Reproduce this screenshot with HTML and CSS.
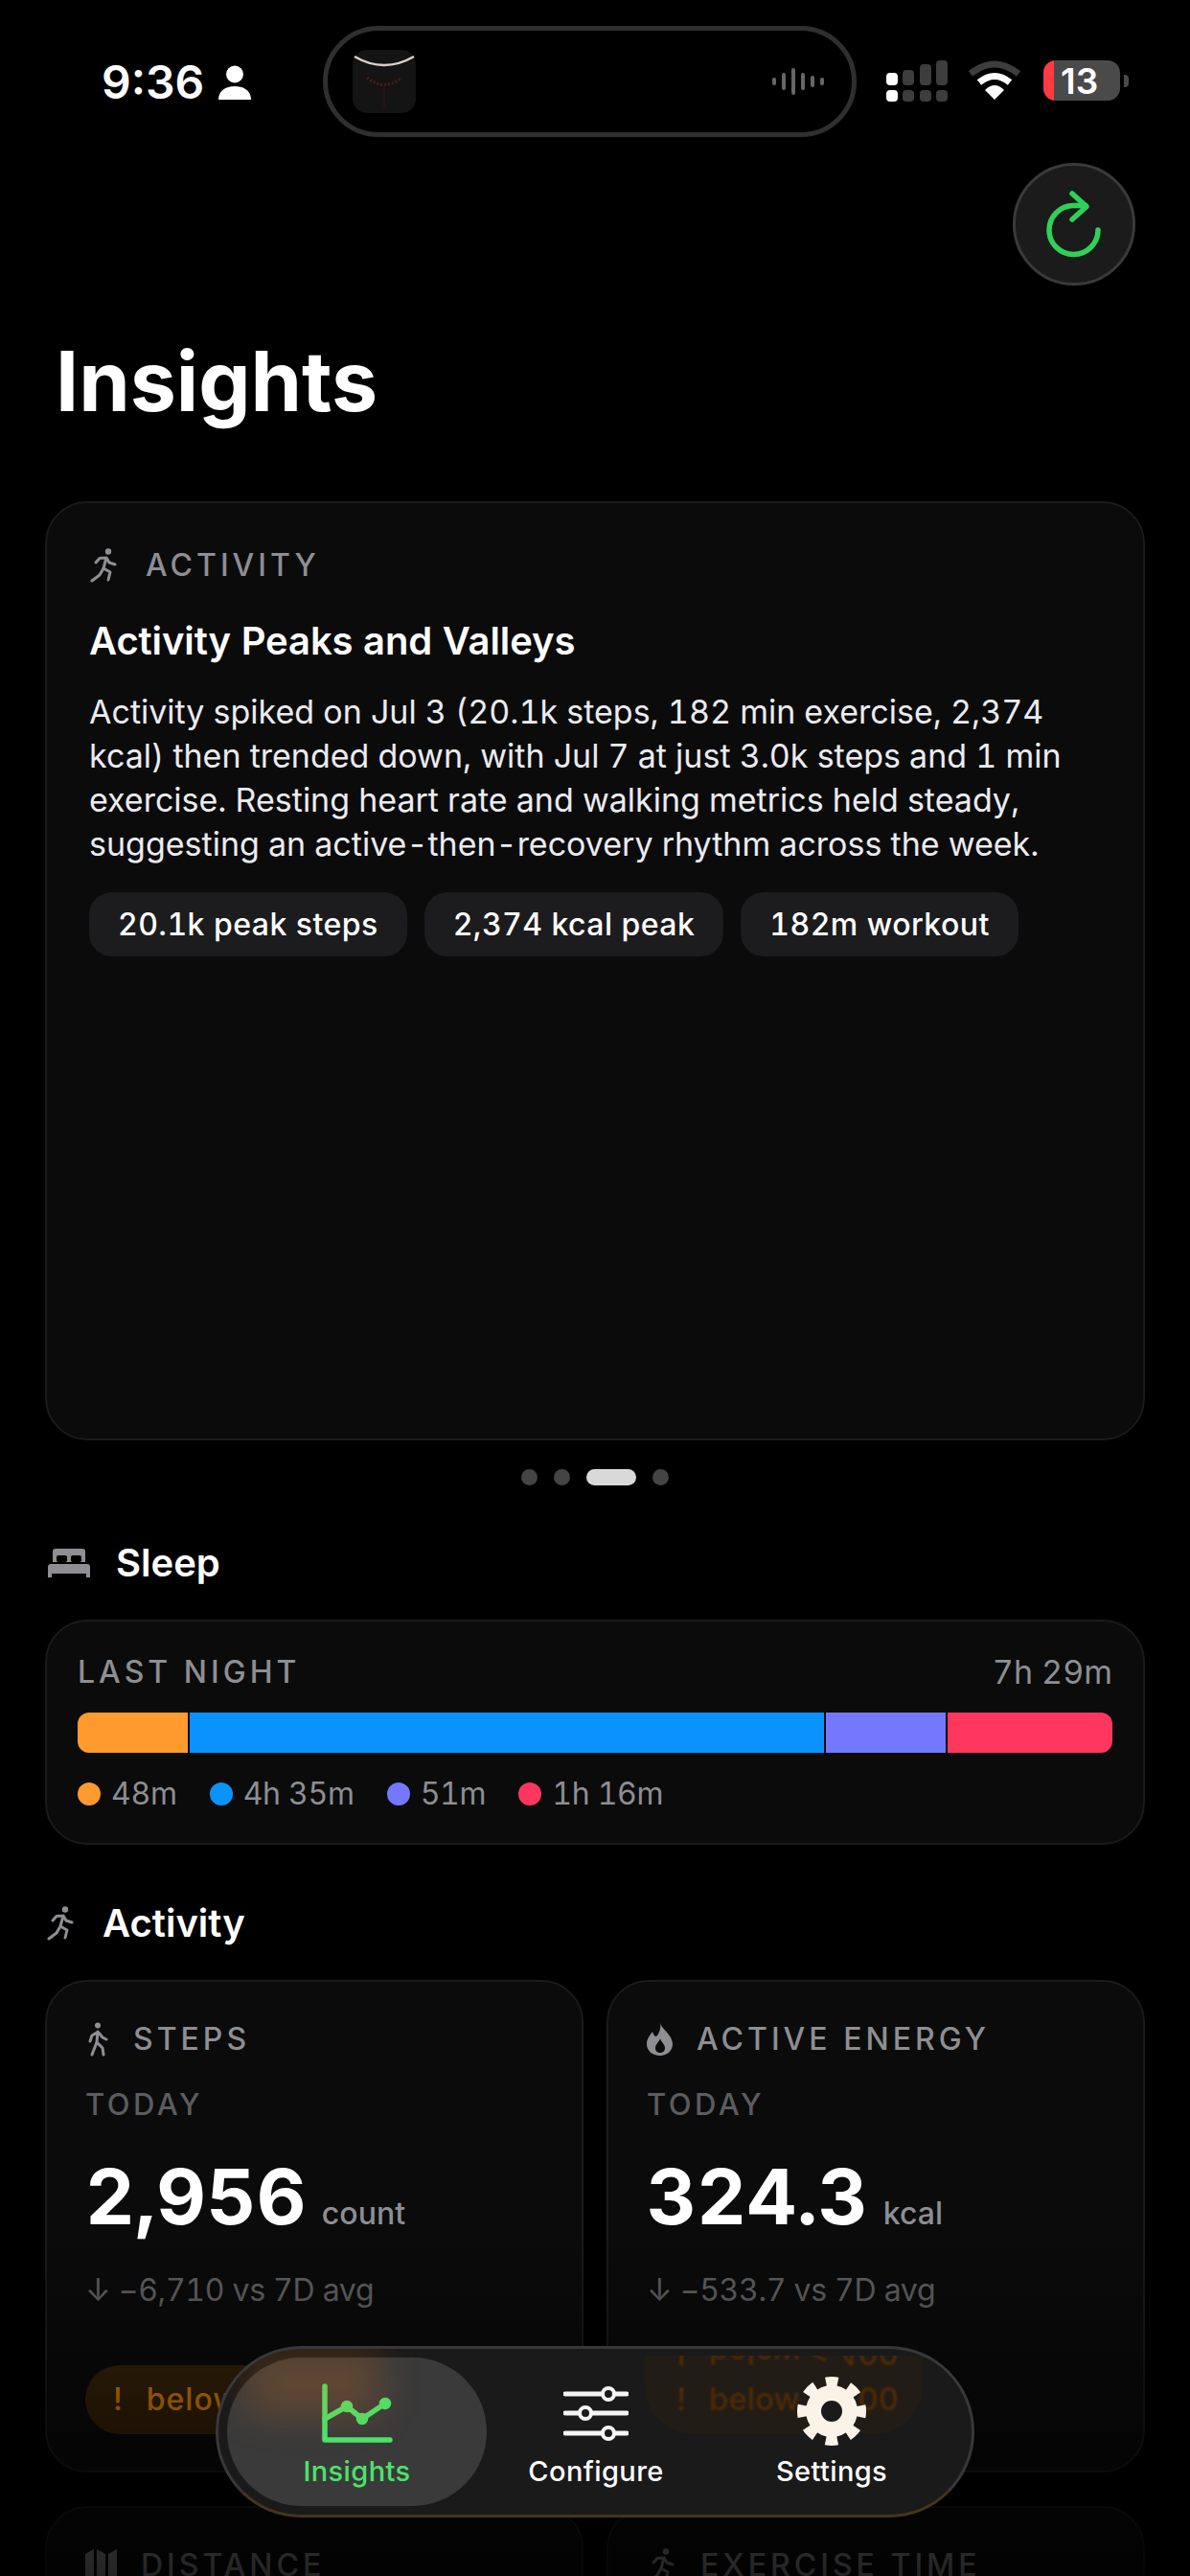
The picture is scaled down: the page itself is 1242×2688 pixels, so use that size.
FILE: index.html
```html
<!DOCTYPE html>
<html lang="en">
<head>
  <meta charset="UTF-8" />
  <meta name="viewport" content="width=device-width, initial-scale=1.0" />
  <title>Insights</title>
  <link rel="stylesheet" href="styles.css">
</head>
<body>

  <div class="status">
    <span class="time">9:36</span>
    <svg class="person" viewBox="0 0 34 36" width="34" height="36"><circle cx="17" cy="9.5" r="9"/><path d="M0 36c0-9 7-14 17-14s17 5 17 14z"/></svg>
    <div class="island">
      <svg class="app-icon" viewBox="0 0 66 66" width="66" height="66">
        <rect width="66" height="66" rx="15" fill="#151414"/>
        <path d="M2 7Q33 25 64 7" fill="none" stroke="#d8d2cc" stroke-width="2.5"/>
        <path d="M15 29Q33 44 51 29" fill="none" stroke="#4a1c1c" stroke-width="3" stroke-dasharray="2 2"/>
        <path d="M33 38V60" stroke="#2e1414" stroke-width="1.5"/>
      </svg>
      <div class="wave">
        <i class="w1"></i><i class="w2"></i><i class="w3"></i><i class="w2"></i><i class="w4"></i><i class="w1"></i>
      </div>
    </div>
    <svg class="signal" viewBox="0 0 64 44" width="64" height="44">
      <rect x="0" y="13" width="12" height="13" rx="4" fill="#fff"/>
      <rect x="17" y="10" width="12" height="16" rx="4" fill="#3d3d3d"/>
      <rect x="35" y="4" width="12" height="22" rx="4" fill="#3d3d3d"/>
      <rect x="52" y="0" width="12" height="26" rx="4" fill="#3d3d3d"/>
      <rect x="0" y="31" width="12" height="12" rx="4" fill="#fff"/>
      <rect x="17" y="31" width="12" height="12" rx="4" fill="#3d3d3d"/>
      <rect x="35" y="31" width="12" height="12" rx="4" fill="#3d3d3d"/>
      <rect x="52" y="31" width="12" height="12" rx="4" fill="#3d3d3d"/>
    </svg>
    <svg class="wifi" viewBox="0 0 56 42" width="56" height="42">
      <path d="M3 14Q28 -6 53 14" fill="none" stroke="#3d3d3d" stroke-width="7"/>
      <path d="M12 23Q28 10 44 23" fill="none" stroke="#fff" stroke-width="7"/>
      <path d="M18 31Q28 21 38 31L28 41z" fill="#fff"/>
    </svg>
    <div class="battery"><span class="battery-low"></span><b>13</b></div>
    <span class="battery-nub"></span>
  </div>

  <div class="refresh-row">
    <button class="refresh">
      <svg viewBox="0 0 60 72" width="60" height="72" fill="none" stroke="#30d158" stroke-width="5.5" stroke-linecap="round" stroke-linejoin="round">
        <path d="M55 42A25.5 25.5 0 1 1 29.5 16.5H42"/>
        <path d="M28 4L43 17.5L28 31"/>
      </svg>
    </button>
  </div>

  <h1 class="page-title">Insights</h1>

  <main class="content">
    <section class="card insight">
      <div class="eyebrow">
        <svg class="run-icon" viewBox="0 0 31 36" width="31" height="36"><use href="#runner"/></svg>
        <span>ACTIVITY</span>
      </div>
      <h2 class="insight-title">Activity Peaks and Valleys</h2>
      <p class="insight-body">Activity spiked on Jul 3 (20.1k steps, 182 min exercise, 2,374 kcal) then trended down, with Jul 7 at just 3.0k steps and 1 min exercise. Resting heart rate and walking metrics held steady, suggesting an active-then-recovery rhythm across the week.</p>
      <div class="chips">
        <span class="chip">20.1k peak steps</span>
        <span class="chip">2,374 kcal peak</span>
        <span class="chip">182m workout</span>
      </div>
    </section>

    <div class="pager">
      <i></i><i></i><i class="on"></i><i></i>
    </div>

    <h2 class="section-head sleep-head">
      <svg viewBox="0 0 44 30" width="44" height="30" fill="#8e8e93">
        <path d="M5 3a3 3 0 0 1 3-3h28a3 3 0 0 1 3 3v11H5z"/>
        <rect x="9" y="7" width="11" height="7" rx="2" fill="#000"/>
        <rect x="24" y="7" width="11" height="7" rx="2" fill="#000"/>
        <path d="M3 16h38a3 3 0 0 1 3 3v7H0v-7a3 3 0 0 1 3-3z"/>
        <rect x="0" y="26" width="4" height="4"/>
        <rect x="40" y="26" width="4" height="4"/>
      </svg>
      <span>Sleep</span>
    </h2>

    <section class="card sleep">
      <div class="sleep-top">
        <span class="sleep-label">LAST NIGHT</span>
        <span class="sleep-total">7h 29m</span>
      </div>
      <div class="sleep-bar">
        <span class="seg core" style="width: 115px"></span>
        <span class="seg deep" style="width: 662px"></span>
        <span class="seg rem" style="width: 125px"></span>
        <span class="seg awake" style="width: 172px"></span>
      </div>
      <div class="legend">
        <span><i class="core"></i>48m</span>
        <span><i class="deep"></i>4h 35m</span>
        <span><i class="rem"></i>51m</span>
        <span><i class="awake"></i>1h 16m</span>
      </div>
    </section>

    <h2 class="section-head activity-head">
      <svg viewBox="0 0 31 36" width="31" height="36"><use href="#runner"/></svg>
      <span>Activity</span>
    </h2>

    <div class="metrics">
      <section class="card metric">
        <div class="eyebrow metric-label">
          <svg viewBox="0 0 25 36" width="25" height="36" fill="none" stroke="#8e8e93" stroke-width="3" stroke-linecap="round" stroke-linejoin="round">
            <circle cx="13" cy="3.5" r="3" fill="#8e8e93" stroke="none"/>
            <path d="M13 10L12 21M12 11L7 14L5 20M14 11L18 16L22 18M12 21L7 34M12 21L18 27L19 34"/>
          </svg>
          <span>STEPS</span>
        </div>
        <div class="period">TODAY</div>
        <div class="value">2,956 <small>count</small></div>
        <div class="delta">↓ −6,710 vs 7D avg</div>
        <div class="flag"><b>!</b>below &lt; 400</div>
      </section>

      <section class="card metric">
        <div class="eyebrow metric-label">
          <svg viewBox="0 0 27 34" width="27" height="34">
            <path fill="#8e8e93" d="M14 0C15 6 27 12 27 22C27 29 21 34 14 34C6 34 0 29 0 22C0 16 4 12 6 9C7 12 8 14 10 14C13 11 15 6 14 0Z"/>
            <path fill="#0b0b0b" d="M14 16C15 20 19 22 19 26C19 29 17 31 14 31C11 31 9 29 9 26C9 22 13 20 14 16Z"/>
          </svg>
          <span>ACTIVE ENERGY</span>
        </div>
        <div class="period">TODAY</div>
        <div class="value">324.3 <small>kcal</small></div>
        <div class="delta">↓ −533.7 vs 7D avg</div>
        <div class="flag"><b>!</b>below &lt; 400</div>
      </section>

      <section class="card metric">
        <div class="eyebrow metric-label">
          <svg viewBox="0 0 33 38" width="33" height="38" fill="#8e8e93">
            <path d="M0 7L9 2V31L0 36z"/><path d="M12 2L21 7V36L12 31z"/><path d="M24 7L33 2V31L24 36z"/>
          </svg>
          <span>DISTANCE</span>
        </div>
      </section>

      <section class="card metric">
        <div class="eyebrow metric-label">
          <svg viewBox="0 0 31 36" width="31" height="36"><use href="#runner"/></svg>
          <span>EXERCISE TIME</span>
        </div>
      </section>
    </div>
  </main>

  <div class="fade"></div>

  <nav class="tabbar">
    <div class="glow glow-left"></div>
    <div class="glow glow-right">
      <span class="ghost flip"><b>!</b>below &lt; 400</span>
      <span class="ghost"><b>!</b>below &lt; 400</span>
    </div>
    <a class="tab active">
      <svg viewBox="0 0 74 62" width="74" height="62" fill="none" stroke="#4ce26a" stroke-width="5.5" stroke-linecap="round" stroke-linejoin="round">
        <path d="M3 3V59H71"/>
        <path d="M3 37L26 24L42 37L66 21"/>
        <circle cx="26" cy="24" r="3.5" fill="#4ce26a"/><circle cx="42" cy="37" r="3.5" fill="#4ce26a"/><circle cx="66" cy="21" r="3.5" fill="#4ce26a"/>
      </svg>
      <span>Insights</span>
    </a>
    <a class="tab">
      <svg viewBox="0 0 68 62" width="68" height="62" fill="none" stroke="#f5f5f5" stroke-width="5" stroke-linecap="round">
        <path d="M2 11H66M2 31H66M2 52H66"/>
        <circle cx="47" cy="11" r="6" fill="#1a1a1a" stroke-width="4"/>
        <circle cx="23" cy="31" r="6" fill="#1a1a1a" stroke-width="4"/>
        <circle cx="47" cy="52" r="6" fill="#1a1a1a" stroke-width="4"/>
      </svg>
      <span>Configure</span>
    </a>
    <a class="tab">
      <svg viewBox="0 0 74 74" width="74" height="74">
        <circle cx="37" cy="37" r="27" fill="#fbf3e8"/>
        <circle cx="37" cy="37" r="30" fill="none" stroke="#fbf3e8" stroke-width="12" stroke-dasharray="12 11.56" stroke-dashoffset="6"/>
        <circle cx="37" cy="37" r="11" fill="#1a1a1a"/>
      </svg>
      <span>Settings</span>
    </a>
  </nav>

  <svg class="defs" width="0" height="0">
    <symbol id="runner" viewBox="0 0 31 36">
      <circle cx="20" cy="3.5" r="3.2" fill="#8e8e93"/>
      <path fill="none" stroke="#8e8e93" stroke-width="3" stroke-linecap="round" stroke-linejoin="round" d="M18 10L15 21M7 15L11 10.5L18 10L21 15L27 17M15 21L22 25L20 33M15 21L11 28L3 34"/>
    </symbol>
  </svg>

</body>
</html>
```

FILE: styles.css
```css
* {
  box-sizing: border-box;
}

html, body {
  height: 2688px;
}

body {
  font-family: 'Inter', 'Liberation Sans', sans-serif;
  font-variant-numeric: tabular-nums;
  margin: 0;
  background: #000;
  color: #fff;
  overflow: hidden;
  position: relative;
}

.defs {
  position: absolute;
}

/* status bar */
.status {
  display: flex;
  align-items: center;
  height: 116px;
  margin-top: 27px;
  padding-left: 106px;
}

.time {
  font-size: 48px;
  font-weight: 600;
  font-variant-numeric: normal;
  width: 122px;
}

.person {
  fill: #fff;
  margin-top: 2px;
}

.island {
  width: 557px;
  height: 116px;
  margin-left: 75px;
  border: 5px solid #2f2f2f;
  border-radius: 58px;
  display: flex;
  align-items: center;
  justify-content: space-between;
  padding: 0 29px 0 26px;
}

.wave {
  display: flex;
  align-items: center;
  gap: 6px;
}

.wave i {
  display: block;
  width: 4px;
  background: #666;
  border-radius: 2px;
}

.w1 { height: 8px; }
.w2 { height: 18px; }
.w3 { height: 28px; }
.w4 { height: 12px; }

.signal {
  margin-left: 31px;
  margin-top: -1px;
}

.wifi {
  margin-left: 21px;
  margin-top: -2px;
}

.battery {
  width: 80px;
  height: 42px;
  margin-left: 23px;
  margin-top: -2px;
  background: #4a4a4a;
  border-radius: 13px;
  overflow: hidden;
  display: flex;
  align-items: center;
  position: relative;
}

.battery-low {
  width: 11px;
  height: 100%;
  background: #ff3b41;
}

.battery b {
  font-size: 37px;
  font-weight: 600;
  font-variant-numeric: normal;
  margin-left: 7px;
}

.battery-nub {
  width: 5px;
  height: 13px;
  margin-left: 4px;
  margin-top: -2px;
  background: #4a4a4a;
  border-radius: 0 4px 4px 0;
}

/* header */
.refresh-row {
  display: flex;
  justify-content: flex-end;
  margin-top: 27px;
  padding-right: 57px;
}

.refresh {
  width: 128px;
  height: 128px;
  padding: 0;
  background: #1b1b1b;
  border: 3px solid #3a3a3a;
  border-radius: 50%;
  display: flex;
  align-items: center;
  justify-content: center;
}

.page-title {
  font-size: 86px;
  font-weight: 700;
  line-height: 90px;
  margin: 55px 0 80px 58px;
}

.content {
  padding: 0 47px;
}

.card {
  background: #0b0b0b;
  border: 2px solid #1b1b1b;
  border-radius: 44px;
}

/* insight carousel */
.insight {
  height: 980px;
  padding: 45px 44px;
}

.eyebrow {
  display: flex;
  align-items: center;
  gap: 28px;
  color: #8e8e93;
  font-size: 32px;
  font-weight: 500;
  letter-spacing: 4px;
}

.insight-title {
  font-size: 40px;
  font-weight: 600;
  letter-spacing: -0.1px;
  line-height: 50px;
  margin: 35px 0 26px;
}

.insight-body {
  font-size: 34px;
  line-height: 46px;
  color: #ebebf0;
  margin: 0 0 27px;
}

.chips {
  display: flex;
  gap: 18px;
}

.chip {
  height: 67px;
  padding: 0 30px;
  background: #1c1c1e;
  border-radius: 24px;
  font-size: 32px;
  font-weight: 500;
  letter-spacing: 0.45px;
  line-height: 67px;
}

.pager {
  display: flex;
  justify-content: center;
  gap: 17px;
  margin-top: 30px;
}

.pager i {
  width: 17px;
  height: 17px;
  background: #444;
  border-radius: 9px;
}

.pager .on {
  width: 52px;
  background: #d9d9d9;
}

/* sections */
.section-head {
  display: flex;
  align-items: center;
  font-size: 40px;
  font-weight: 600;
  line-height: 50px;
  margin: 56px 0 34px;
}

.sleep-head {
  gap: 27px;
  padding-left: 3px;
}

.activity-head {
  gap: 28px;
  padding-left: 1px;
  margin-top: 57px;
}

.sleep {
  height: 235px;
  padding: 33px 32px 0;
}

.sleep-top {
  display: flex;
  justify-content: space-between;
  color: #8e8e93;
  font-size: 32px;
  line-height: 40px;
}

.sleep-label {
  letter-spacing: 4px;
  font-weight: 500;
}

.sleep-total {
  font-size: 34px;
}

.sleep-bar {
  display: flex;
  gap: 2px;
  height: 42px;
  margin-top: 22px;
  border-radius: 12px;
  overflow: hidden;
}

.seg.core, .legend .core { background: #ff9a2e; }
.seg.deep, .legend .deep { background: #0a93ff; }
.seg.rem, .legend .rem { background: #7478ff; }
.seg.awake, .legend .awake { background: #ff375f; }

.legend {
  display: flex;
  gap: 34px;
  margin-top: 23px;
  color: #8e8e93;
  font-size: 32px;
  letter-spacing: -0.3px;
  line-height: 40px;
}

.legend span {
  display: flex;
  align-items: center;
}

.legend i {
  width: 24px;
  height: 24px;
  border-radius: 50%;
  margin-right: 11px;
}

/* metric grid */
.metrics {
  display: grid;
  grid-template-columns: 1fr 1fr;
  gap: 35px 24px;
}

.metric {
  padding: 40px 40px 38px;
}

.metric-label {
  gap: 25px;
}

.period {
  color: #5c5c60;
  font-size: 31px;
  font-weight: 500;
  letter-spacing: 3.5px;
  line-height: 40px;
  margin-top: 29px;
}

.value {
  font-size: 80px;
  font-weight: 700;
  letter-spacing: 0.5px;
  line-height: 90px;
  margin-top: 31px;
}

.value small {
  color: #8e8e93;
  font-size: 32px;
  font-weight: 500;
  letter-spacing: 0;
  line-height: 1;
  margin-left: -6px;
}

.delta {
  color: #636366;
  font-size: 32px;
  letter-spacing: -0.3px;
  line-height: 40px;
  margin-top: 33px;
}

.flag {
  display: inline-block;
  height: 72px;
  line-height: 72px;
  margin-top: 58px;
  padding: 0 29px;
  background: rgba(255, 149, 0, 0.2);
  color: #ff9500;
  border-radius: 36px;
  font-size: 32px;
  font-weight: 500;
  letter-spacing: 1px;
}

.flag b, .ghost b {
  font-weight: 500;
  margin-right: 24px;
}

.fade {
  position: absolute;
  left: 0;
  right: 0;
  top: 2330px;
  bottom: 0;
  background: linear-gradient(to bottom, rgba(0,0,0,0), rgba(0,0,0,0.45) 48%, rgba(0,0,0,0.75));
  pointer-events: none;
}

/* floating tab bar */
.tabbar {
  position: absolute;
  left: 225px;
  top: 2448px;
  width: 792px;
  height: 179px;
  display: flex;
  padding: 9px;
  background: #1a1a1a;
  border: 3px solid #38383a;
  border-bottom-color: #46341f;
  border-radius: 90px;
  overflow: hidden;
}

.tab {
  position: relative;
  width: 228px;
  display: flex;
  flex-direction: column;
  align-items: center;
  font-size: 29px;
  font-weight: 500;
  letter-spacing: 0.4px;
}

.tab svg {
  height: 62px;
  margin-top: 27px;
}

.tab span {
  position: absolute;
  top: 100px;
  line-height: 38px;
}

.tab.active {
  width: 271px;
  height: 155px;
  background: #3a3a3a;
  border-radius: 78px;
  color: #4ce26a;
}

.tab:last-child {
  width: 264px;
}

.tab:last-child svg {
  height: 74px;
  margin-top: 19px;
}

.glow {
  position: absolute;
  pointer-events: none;
}

.glow-left {
  z-index: 1;
  left: 30px;
  top: 0;
  width: 140px;
  height: 70px;
  background: rgba(255, 130, 20, 0.18);
  filter: blur(18px);
}

.glow-right {
  left: 445px;
  top: 7px;
  width: 290px;
  height: 82px;
  padding-left: 33px;
  background: rgba(120, 60, 0, 0.09);
  border-radius: 0 0 50px 50px;
  overflow: hidden;
}

.ghost {
  display: block;
  color: #4f2b05;
  font-size: 33px;
  font-weight: 500;
  line-height: 40px;
  filter: blur(0.8px);
  height: 40px;
}

.flip {
  transform: scaleY(-1);
  margin-top: -22px;
  margin-bottom: 7px;
}
```
